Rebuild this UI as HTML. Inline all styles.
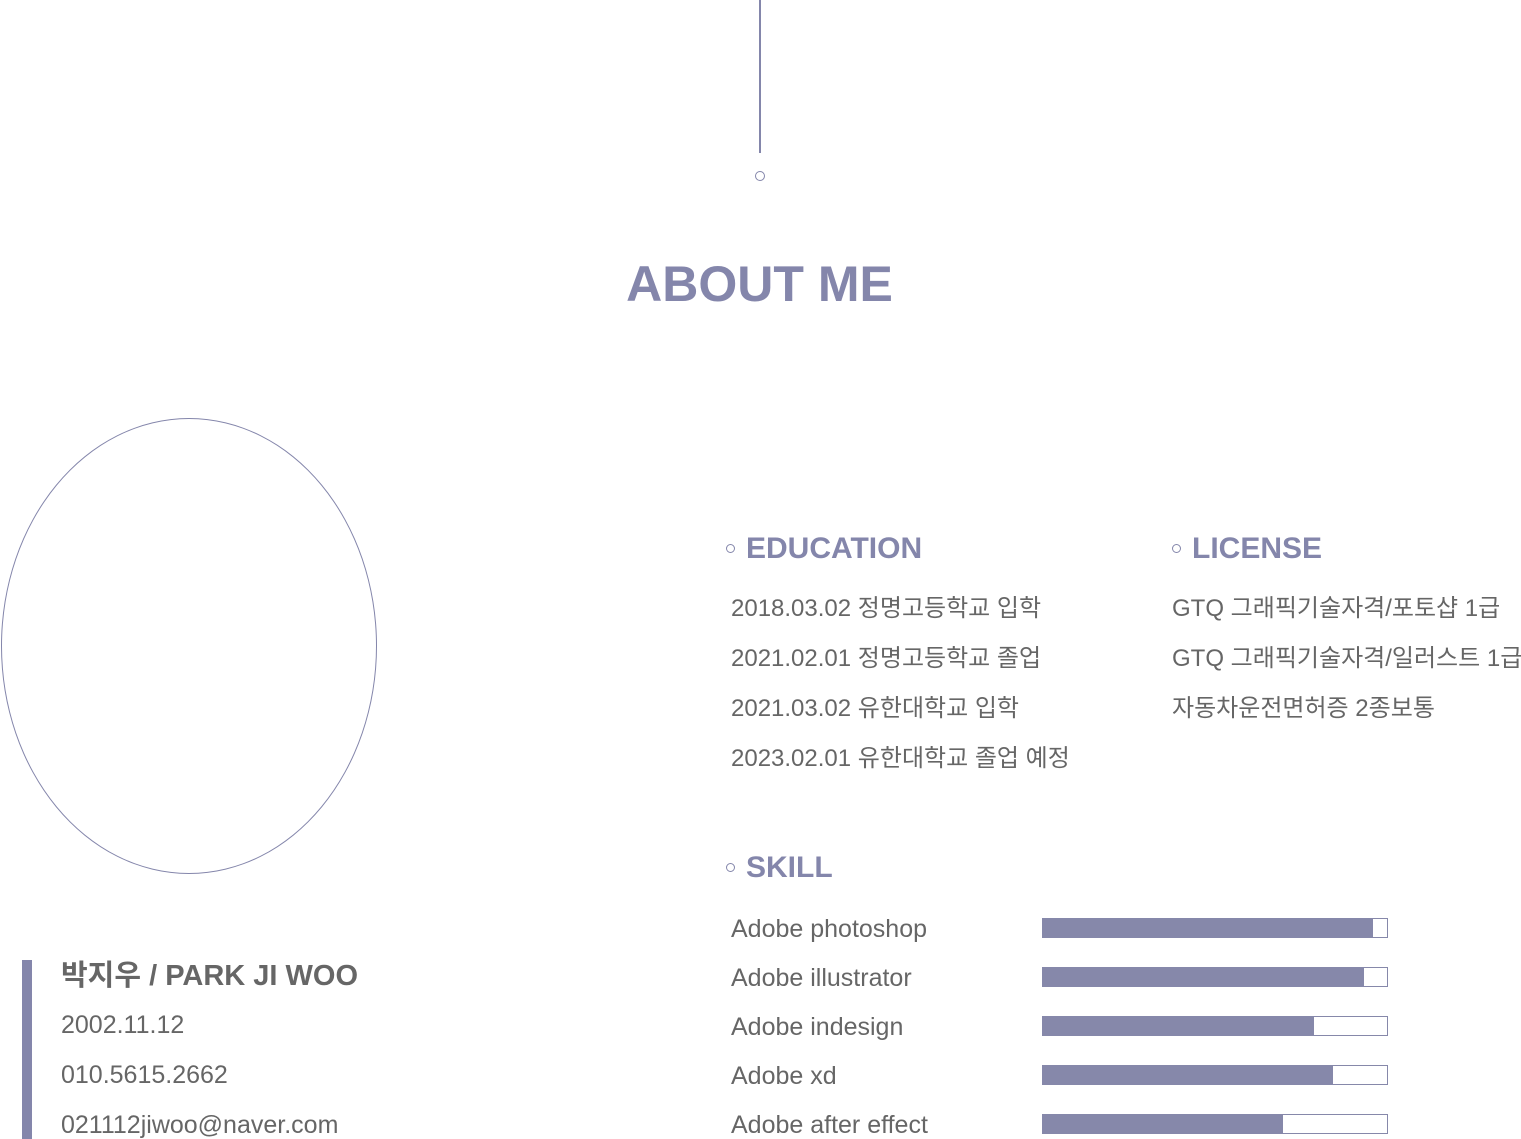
<!DOCTYPE html>
<html><head><meta charset="utf-8"><style>
body{margin:0;width:1521px;height:1139px;background:#fff;position:relative;overflow:hidden;font-family:"Liberation Sans","Noto Sans CJK KR",sans-serif;color:#666}
.a{position:absolute;white-space:nowrap}
.t{font-size:24px;line-height:24px}
.s{font-size:25px;line-height:25px}
.h{font-size:30px;line-height:30px;font-weight:bold;color:#8486ab}
.dot{position:absolute;width:9px;height:9px;border:1px solid #8486ab;border-radius:50%;box-sizing:border-box}
.bar{position:absolute;left:1042px;width:346px;height:20px;border:1px solid #8688aa;box-sizing:border-box;background:#fff}
.bar i{display:block;height:100%;background:#8688aa}
</style></head><body>
<div class="a" style="left:759px;top:0;width:2px;height:153px;background:#8486ab"></div>
<div class="dot" style="left:755px;top:171px;width:10px;height:10px"></div>
<div class="a" style="left:0;width:1519px;text-align:center;top:258px;font-size:50px;line-height:52px;font-weight:bold;color:#8486ab">ABOUT ME</div>
<div class="a" style="left:1px;top:418px;width:376px;height:456px;border:1.5px solid #8486ab;border-radius:50%;box-sizing:border-box"></div>

<div class="dot" style="left:726px;top:544px"></div>
<div class="a h" style="left:746px;top:534px">EDUCATION</div>
<div class="a t" style="left:731px;top:597px">2018.03.02 정명고등학교 입학</div>
<div class="a t" style="left:731px;top:647px">2021.02.01 정명고등학교 졸업</div>
<div class="a t" style="left:731px;top:697px">2021.03.02 유한대학교 입학</div>
<div class="a t" style="left:731px;top:747px">2023.02.01 유한대학교 졸업 예정</div>

<div class="dot" style="left:1172px;top:544px"></div>
<div class="a h" style="left:1192px;top:534px">LICENSE</div>
<div class="a t" style="left:1172px;top:597px">GTQ 그래픽기술자격/포토샵 1급</div>
<div class="a t" style="left:1172px;top:647px">GTQ 그래픽기술자격/일러스트 1급</div>
<div class="a t" style="left:1172px;top:697px">자동차운전면허증 2종보통</div>

<div class="dot" style="left:726px;top:863px"></div>
<div class="a h" style="left:746px;top:853px">SKILL</div>
<div class="a s" style="left:731px;top:917px">Adobe photoshop</div>
<div class="a s" style="left:731px;top:966px">Adobe illustrator</div>
<div class="a s" style="left:731px;top:1015px">Adobe indesign</div>
<div class="a s" style="left:731px;top:1064px">Adobe xd</div>
<div class="a s" style="left:731px;top:1113px">Adobe after effect</div>
<div class="bar" style="top:918px"><i style="width:330px"></i></div>
<div class="bar" style="top:967px"><i style="width:321px"></i></div>
<div class="bar" style="top:1016px"><i style="width:271px"></i></div>
<div class="bar" style="top:1065px"><i style="width:290px"></i></div>
<div class="bar" style="top:1114px"><i style="width:240px"></i></div>

<div class="a" style="left:22px;top:960px;width:10px;height:179px;background:#8486ab"></div>
<div class="a" style="left:61px;top:962px;font-size:29px;line-height:29px;font-weight:bold;color:#666">박지우 / PARK JI WOO</div>
<div class="a s" style="left:61px;top:1013px">2002.11.12</div>
<div class="a s" style="left:61px;top:1063px">010.5615.2662</div>
<div class="a s" style="left:61px;top:1113px">021112jiwoo@naver.com</div>
</body></html>
